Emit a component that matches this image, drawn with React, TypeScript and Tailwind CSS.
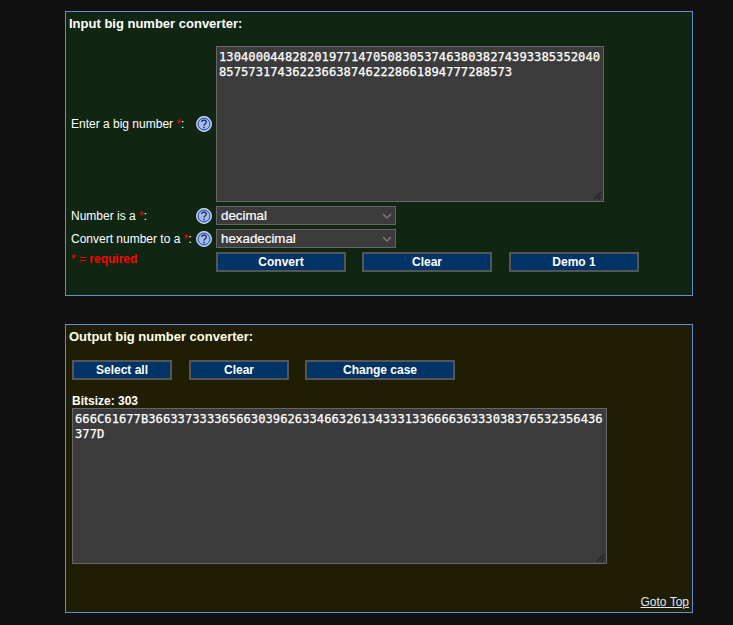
const helpIcon = (
  <svg width="16" height="16" viewBox="0 0 16 16" className="shrink-0">
    <circle cx="8" cy="8" r="7.4" fill="#7f9fe0" stroke="#c9dbfa" strokeWidth="1.1" />
    <circle cx="8" cy="8" r="5.8" fill="#a4bcf0" stroke="#2f4fa0" strokeWidth="0.9" />
    <path d="M5.7 6.1 C5.7 3.4 10.3 3.4 10.3 6.1 C10.3 7.8 8 7.6 8 9.8" fill="none" stroke="#16224f" strokeWidth="1.2" />
    <rect x="7.3" y="10.8" width="1.4" height="1.5" fill="#16224f" />
  </svg>
)

function Btn({ label, width }: { label: string; width: string }) {
  return (
    <button className={`${width} h-[20px] shrink-0 border-[2px] border-[#555] bg-[#003366] text-[12px] font-bold leading-none text-white`}>
      {label}
    </button>
  )
}

function Select({ value }: { value: string }) {
  return (
    <div className="flex h-[19px] w-[180px] items-center justify-between border border-[#666] bg-[#3b3b3b] pl-[4px] pr-[3px] text-[13.33px] text-white [-webkit-text-stroke:0.2px_white]">
      <span>{value}</span>
      <svg width="10" height="6" viewBox="0 0 10 6"><path d="M1 1l4 4 4-4" fill="none" stroke="#777" strokeWidth="1.5" /></svg>
    </div>
  )
}

function Grip() {
  return (
    <svg width="9" height="9" viewBox="0 0 9 9" className="absolute bottom-[1px] right-[1px]">
      <path d="M8.5 1L1 8.5M8.5 5L5 8.5" stroke="#222" strokeWidth="1.2" />
    </svg>
  )
}

const star = <span className="text-[#ff0000]">*</span>

export default function App() {
  return (
    <div className="h-[625px] overflow-hidden bg-[#111111] pl-[65px] pt-[11px] text-[12px] text-white [font-family:'Liberation_Sans',Arial,sans-serif]">
      <div className="flex h-[285px] w-[628px] flex-col border border-[#6a8cc8] bg-[#102613] pl-[3px] pt-[3px]">
        <h2 className="text-[13px] font-bold leading-[17px] text-white">Input big number converter:</h2>
        <div className="mt-[14px] flex items-center pl-[2px]">
          <span className="w-[125px] shrink-0">Enter a big number {star}:</span>
          {helpIcon}
          <div className="relative ml-[4px] h-[156px] w-[388px] border border-[#666] bg-[#3b3b3b] px-[2px] pt-[3px] text-[12.18px] leading-[15px] break-all text-white [-webkit-text-stroke:0.25px_white] [font-family:'DejaVu_Sans_Mono',monospace]">
            1304000448282019771470508305374638038274393385352040 8575731743622366387462228661894777288573
            <Grip />
          </div>
        </div>
        <div className="mt-[4px] flex items-center pl-[2px]">
          <span className="w-[125px] shrink-0">Number is a {star}:</span>
          {helpIcon}
          <div className="ml-[4px]"><Select value="decimal" /></div>
        </div>
        <div className="mt-[4px] flex items-center pl-[2px]">
          <span className="w-[125px] shrink-0">Convert number to a {star}:</span>
          {helpIcon}
          <div className="ml-[4px]"><Select value="hexadecimal" /></div>
        </div>
        <div className="mt-[4px] flex items-start pl-[2px]">
          <span className="w-[145px] shrink-0 leading-[14px] text-[#ff0000]">* = <b>required</b></span>
          <div className="flex">
            <Btn label="Convert" width="w-[130px]" />
            <div className="w-[16px] shrink-0" />
            <Btn label="Clear" width="w-[130px]" />
            <div className="w-[17px] shrink-0" />
            <Btn label="Demo 1" width="w-[130px]" />
          </div>
        </div>
      </div>

      <div className="relative mt-[28px] flex h-[289px] w-[628px] flex-col border border-[#6a8cc8] bg-[#1f1d03] pl-[3px] pt-[3px]">
        <h2 className="text-[13px] font-bold leading-[17px] text-[#ffffe6]">Output big number converter:</h2>
        <div className="ml-[3px] mt-[15px] flex">
          <Btn label="Select all" width="w-[100px]" />
          <div className="w-[17px] shrink-0" />
          <Btn label="Clear" width="w-[100px]" />
          <div className="w-[16px] shrink-0" />
          <Btn label="Change case" width="w-[150px]" />
        </div>
        <div className="ml-[3px] mt-[14px] leading-[14px] font-bold">Bitsize: 303</div>
        <div className="relative ml-[3px] h-[156px] w-[535px] border border-[#666] bg-[#3b3b3b] px-[2px] pt-[3px] text-[12.18px] leading-[15px] break-all text-white [-webkit-text-stroke:0.25px_white] [font-family:'DejaVu_Sans_Mono',monospace]">
          666C61677B36633733336566303962633466326134333133666636333038376532356436377D
          <Grip />
        </div>
        <a href="#top" className="absolute bottom-[3px] right-[3px] text-[12px] leading-[14px] text-[#dfe8ff] underline">Goto Top</a>
      </div>
    </div>
  )
}
